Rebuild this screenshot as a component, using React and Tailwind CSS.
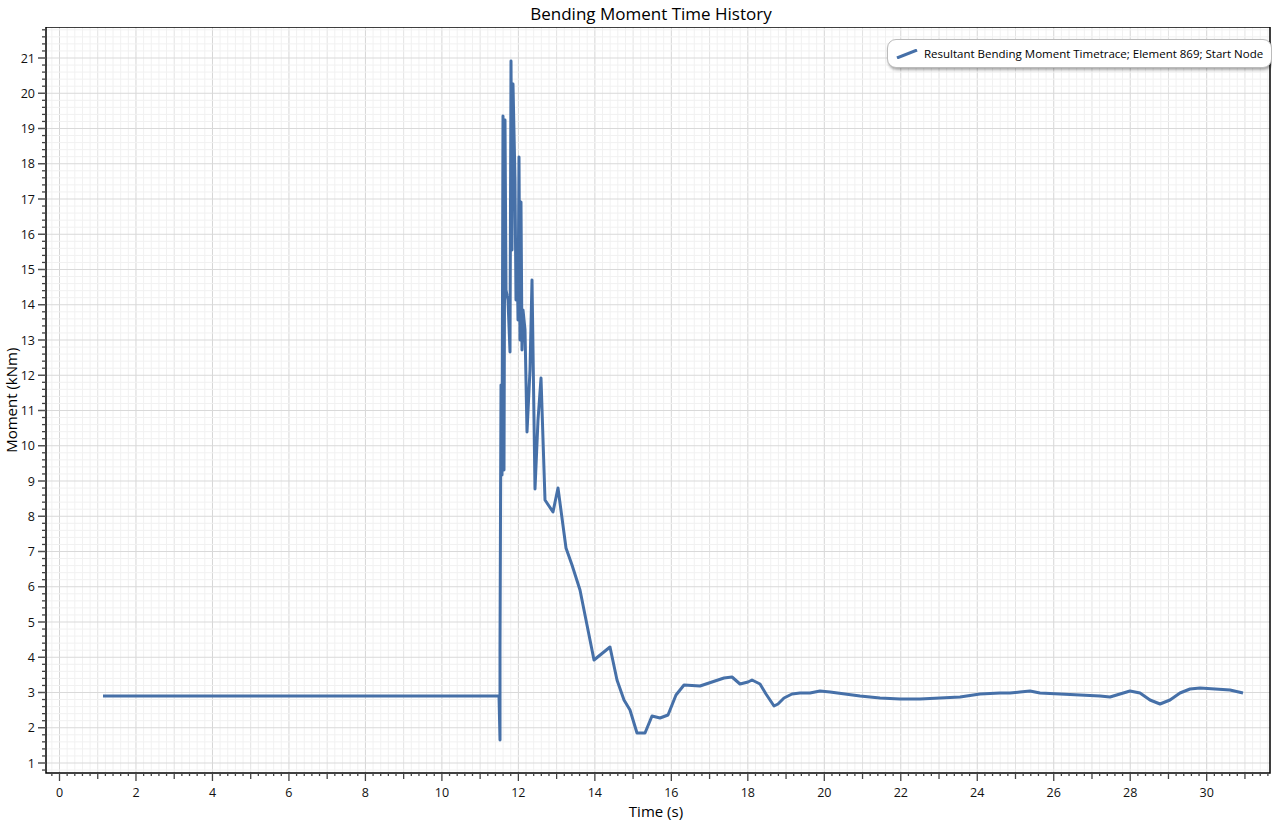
const X0 = 46, X1 = 1270, Y0 = 27, Y1 = 773;
const tx = (t) => 59.5 + 38.24 * t;
const vy = (v) => 763 - (v - 1) * 35.25;

const pts = [
  [103,696],[499,696],[500,740],[500,650],[501,385],[502,475],[503,116],[504,470],[505,120],[506,290],[508,300],[510,352],[511,61],[512,250],[513,84],[515,180],[516,300],[517,240],[518,320],[519,157],[520,340],[521,202],[522,350],[523,310],[525,330],[527,432],[530,370],[532,280],[535,489],[538,420],[541,378],[545,500],[553,512],[558,488],[566,548],[572,565],[580,590],[586,620],[594,660],[610,647],[617,680],[624,700],[630,710],[637,733],[645,733],[652,716],[660,718],[668,715],[676,695],[684,685],[700,686],[712,682],[724,678],[732,677],[740,684],[748,682],[752,680],[760,684],[766,694],[774,706],[778,704],[784,698],[792,694],[800,693],[810,693],[820,691],[830,692],[845,694],[860,696],[880,698],[900,699],[920,699],[940,698],[960,697],[980,694],[1000,693],[1010,693],[1020,692],[1030,691],[1040,693],[1060,694],[1080,695],[1100,696],[1110,697],[1120,694],[1130,691],[1140,693],[1150,700],[1160,704],[1170,700],[1180,693],[1190,689],[1200,688],[1215,689],[1230,690],[1243,693],
];

const range = (a, b, s) => { const r = []; for (let v = a; v <= b + 1e-9; v += s) r.push(Math.round(v * 10) / 10); return r; };

export default function App() {
  const font = { fontFamily: '"Open Sans", "Noto Sans", sans-serif' };
  const xMinor = range(-0.4, 31.8, 0.2).filter((t) => tx(t) > X0 && tx(t) < X1);
  const yMinor = range(0.8, 21.8, 0.2).filter((v) => vy(v) > Y0 && vy(v) < Y1);
  return (
    <div className="relative w-[1272px] h-[821px] bg-white flex flex-col text-black" style={font}>
      <div className="h-[27px] flex items-center justify-center text-[17px] pl-[30px]">Bending Moment Time History</div>
      <div className="flex">
        <div className="w-[19px] flex items-center justify-center">
          <div className="-rotate-90 whitespace-nowrap text-[15px] mt-[-24px] ml-[4px]">Moment (kNm)</div>
        </div>
        <svg width="1253" height="770" viewBox="19 27 1253 770" className="block">
          {xMinor.map((t) => {
            const major = Math.abs(t % 2) < 1e-6, mid = Math.abs(t % 1) < 1e-6;
            return <line key={'gx' + t} x1={tx(t)} x2={tx(t)} y1={Y0} y2={Y1} stroke={major ? '#d6d6d6' : mid ? '#e3e3e3' : '#f1f1f1'} strokeWidth="1" />;
          })}
          {yMinor.map((v) => {
            const major = Math.abs(v % 1) < 1e-6;
            return <line key={'gy' + v} x1={X0} x2={X1} y1={vy(v)} y2={vy(v)} stroke={major ? '#d9d9d9' : '#f1f1f1'} strokeWidth="1" />;
          })}
          <polyline points={pts.map((p) => p.join(',')).join(' ')} fill="none" stroke="#4670a8" strokeWidth="3" strokeLinejoin="round" />
          <rect x={X0} y={Y0} width={X1 - X0} height={Y1 - Y0} fill="none" stroke="#000" strokeWidth="1.5" />
          {yMinor.map((v) => {
            const major = Math.abs(v % 1) < 1e-6;
            return <line key={'ty' + v} x1={major ? 38 : 42} x2={X0} y1={vy(v)} y2={vy(v)} stroke={major ? '#555' : '#444'} strokeWidth={major ? 1.5 : 1.3} />;
          })}
          {xMinor.map((t) => {
            const major = Math.abs(t % 2) < 1e-6, mid = Math.abs(t % 1) < 1e-6;
            return <line key={'tx' + t} x1={tx(t)} x2={tx(t)} y1={Y1} y2={Y1 + (major ? 8 : mid ? 6 : 3)} stroke="#444" strokeWidth="1.3" />;
          })}
          {range(1, 21, 1).map((v) => (
            <text key={'ly' + v} x="35" y={vy(v) + 4.5} textAnchor="end" fontSize="12.5" fill="#111">{v}</text>
          ))}
          {range(0, 30, 2).map((t) => (
            <text key={'lx' + t} x={tx(t)} y="797" textAnchor="middle" fontSize="12.5" fill="#111">{t}</text>
          ))}
        </svg>
      </div>
      <div className="flex-1 flex items-start justify-center text-[15px] pl-[40px] leading-none pt-[7px]">Time (s)</div>
      <div className="absolute left-[887px] top-[39px] h-[29px] px-[8px] flex items-center gap-[6px] bg-white rounded-[9px] border border-[#bbb] shadow-[1px_2px_3px_rgba(0,0,0,0.35)] text-[11.5px] whitespace-nowrap">
        <svg width="22" height="10"><line x1="1" y1="9" x2="21" y2="1" stroke="#4670a8" strokeWidth="3" /></svg>
        <span>Resultant Bending Moment Timetrace; Element 869; Start Node</span>
      </div>
    </div>
  );
}
